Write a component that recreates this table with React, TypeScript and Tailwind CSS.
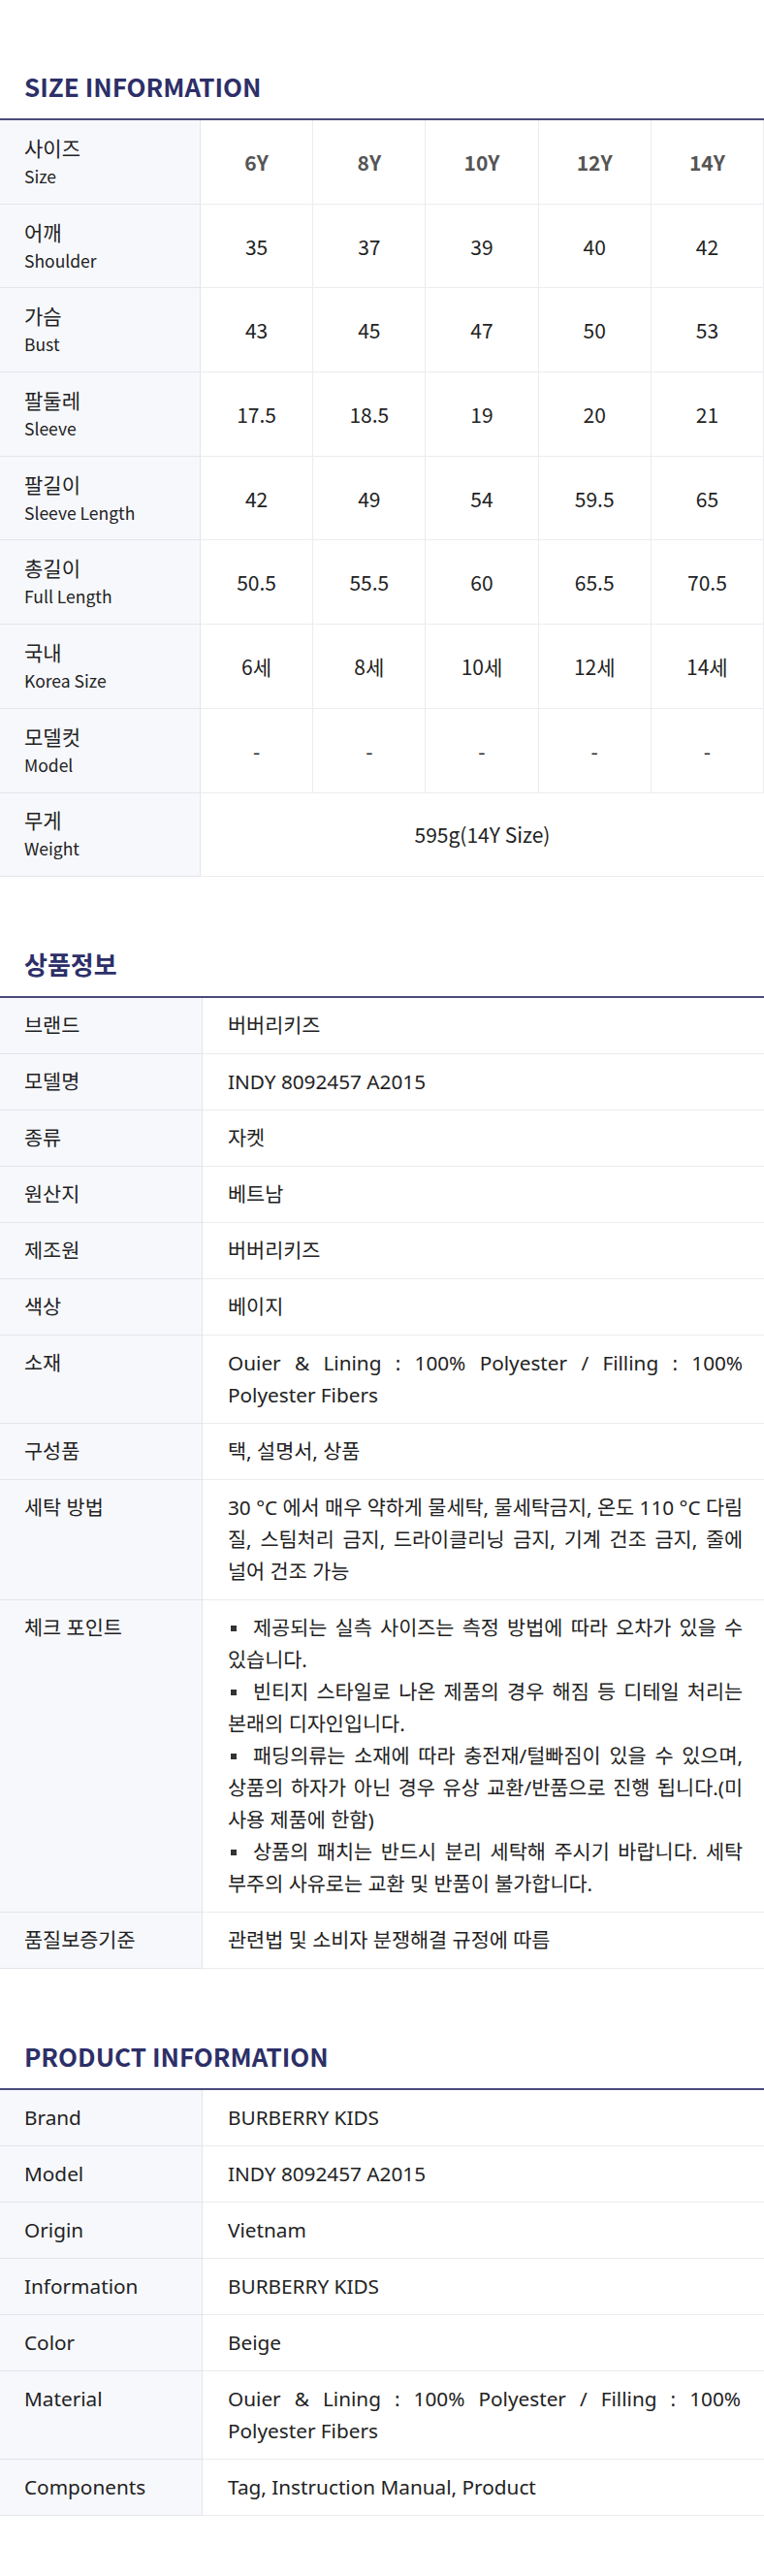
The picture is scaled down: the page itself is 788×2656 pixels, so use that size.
import React from 'react';

const sizes = ['6Y', '8Y', '10Y', '12Y', '14Y'];

const sizeRows = [
  { ko: '어깨', en: 'Shoulder', values: ['35', '37', '39', '40', '42'] },
  { ko: '가슴', en: 'Bust', values: ['43', '45', '47', '50', '53'] },
  { ko: '팔둘레', en: 'Sleeve', values: ['17.5', '18.5', '19', '20', '21'] },
  { ko: '팔길이', en: 'Sleeve Length', values: ['42', '49', '54', '59.5', '65'] },
  { ko: '총길이', en: 'Full Length', values: ['50.5', '55.5', '60', '65.5', '70.5'] },
  { ko: '국내', en: 'Korea Size', values: ['6세', '8세', '10세', '12세', '14세'] },
  { ko: '모델컷', en: 'Model', values: ['-', '-', '-', '-', '-'] },
];

const material = 'Ouier & Lining : 100% Polyester / Filling : 100% Polyester Fibers';

const checkPoints = [
  '제공되는 실측 사이즈는 측정 방법에 따라 오차가 있을 수 있습니다.',
  '빈티지 스타일로 나온 제품의 경우 해짐 등 디테일 처리는 본래의 디자인입니다.',
  '패딩의류는 소재에 따라 충전재/털빠짐이 있을 수 있으며, 상품의 하자가 아닌 경우 유상 교환/반품으로 진행 됩니다.(미사용 제품에 한함)',
  '상품의 패치는 반드시 분리 세탁해 주시기 바랍니다. 세탁 부주의 사유로는 교환 및 반품이 불가합니다.',
];

// washing text: lines kept as in the original layout
const washing = [
  '30 °C 에서 매우 약하게 물세탁, 물세탁금지, 온도 110 °C 다림',
  '질, 스팀처리 금지, 드라이클리닝 금지, 기계 건조 금지, 줄에',
  '널어 건조 가능',
];

const koInfo: [string, React.ReactNode][] = [
  ['브랜드', '버버리키즈'],
  ['모델명', 'INDY 8092457 A2015'],
  ['종류', '자켓'],
  ['원산지', '베트남'],
  ['제조원', '버버리키즈'],
  ['색상', '베이지'],
  ['소재', material],
  ['구성품', '택, 설명서, 상품'],
  [
    '세탁 방법',
    <>
      {washing.map((line, i) => (
        <span
          key={line}
          className={i < washing.length - 1 ? 'block whitespace-nowrap [text-align-last:justify]' : 'block'}
        >
          {line}
        </span>
      ))}
    </>,
  ],
  [
    '체크 포인트',
    <>
      {checkPoints.map((text) => (
        <div key={text}>
          <span className="inline-block w-[6px] h-[6px] bg-[#333] align-middle mr-[17px] ml-[3px] -mt-[3px]" />
          {text}
        </div>
      ))}
    </>,
  ],
  ['품질보증기준', '관련법 및 소비자 분쟁해결 규정에 따름'],
];

const enInfo: [string, string][] = [
  ['Brand', 'BURBERRY KIDS'],
  ['Model', 'INDY 8092457 A2015'],
  ['Origin', 'Vietnam'],
  ['Information', 'BURBERRY KIDS'],
  ['Color', 'Beige'],
  ['Material', material],
  ['Components', 'Tag, Instruction Manual, Product'],
];

function Title({ children }: { children: React.ReactNode }) {
  return (
    <h2 className="px-[25px] mb-[13px] text-[26px] leading-[40px] font-bold text-[#2d2f68] [font-family:'Noto_Sans_CJK_KR',sans-serif]">
      {children}
    </h2>
  );
}

function SizeLabel({ ko, en }: { ko: string; en: string }) {
  return (
    <div className="px-[25px] py-[12.85px] bg-[#f7f8fc] border-r border-b border-[#e4e5eb]">
      <div>{ko}</div>
      <div className="text-[17.5px]">{en}</div>
    </div>
  );
}

function SizeTable() {
  const cell = 'flex items-center justify-center border-b border-r border-[#ececef] last:border-r-0';

  return (
    <div className="grid grid-cols-[207px_repeat(5,1fr)] border-t-2 border-[#4a4b7b] text-[21px] leading-[30px] text-[#222] [font-family:'Noto_Sans_CJK_KR',sans-serif]">
      <SizeLabel ko="사이즈" en="Size" />
      {sizes.map((s) => (
        <div key={s} className="flex items-center justify-center border-b border-r border-[#ececef] font-semibold text-[#555]">
          {s}
        </div>
      ))}

      {sizeRows.map((row) => (
        <React.Fragment key={row.en}>
          <SizeLabel ko={row.ko} en={row.en} />
          {row.values.map((v, i) => (
            <div key={i} className={cell}>
              {v}
            </div>
          ))}
        </React.Fragment>
      ))}

      <SizeLabel ko="무게" en="Weight" />
      <div className="col-span-5 flex items-center justify-center border-b border-[#ececef]">595g(14Y Size)</div>
    </div>
  );
}

function InfoTable({ rows }: { rows: [string, React.ReactNode][] }) {
  return (
    <div className="grid grid-cols-[209px_1fr] border-t-2 border-[#4a4b7b] text-[20.75px] leading-[33px] text-[#222] [font-family:'Noto_Sans','Noto_Sans_CJK_KR',sans-serif]">
      {rows.map(([k, v]) => (
        <React.Fragment key={k}>
          <div className="px-[25px] py-[12px] bg-[#f7f8fc] border-r border-b border-[#e4e5eb]">{k}</div>
          <div className="pl-[26px] pr-[24px] py-[12px] border-b border-[#ececef] text-justify">{v}</div>
        </React.Fragment>
      ))}
    </div>
  );
}

export default function App() {
  return (
    <div className="w-[788px] bg-white flex flex-col gap-[70px] pt-[69px] pb-[68px]">
      <section>
        <Title>SIZE INFORMATION</Title>
        <SizeTable />
      </section>

      <section>
        <Title>상품정보</Title>
        <InfoTable rows={koInfo} />
      </section>

      <section>
        <Title>PRODUCT INFORMATION</Title>
        <InfoTable rows={enInfo} />
      </section>
    </div>
  );
}
